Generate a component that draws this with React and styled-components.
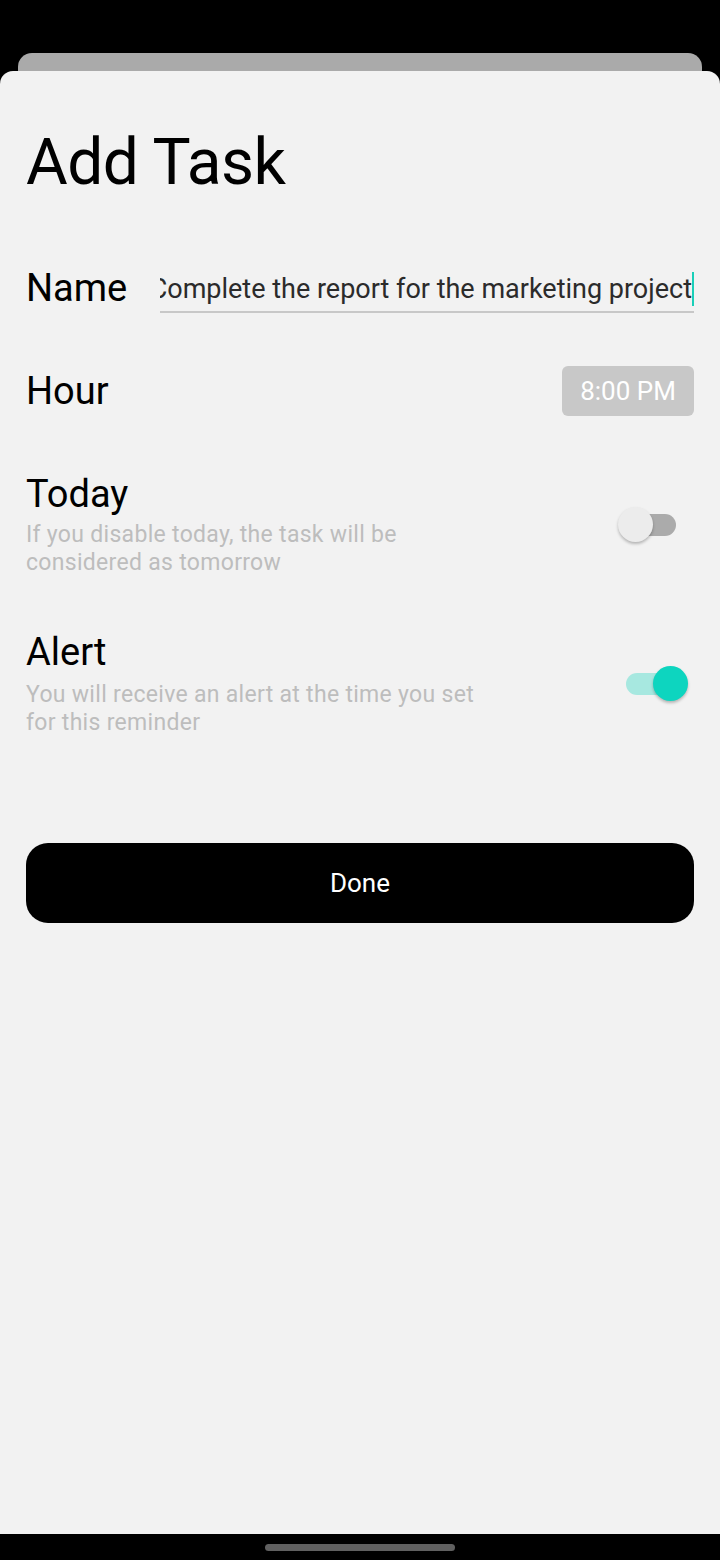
import React, { useState } from "react";
import styled, { createGlobalStyle } from "styled-components";

const GlobalStyle = createGlobalStyle`
  html, body {
    margin: 0;
    padding: 0;
    background: #000;
  }
  body {
    font-family: Roboto, "Liberation Sans", sans-serif;
  }
`;

const Screen = styled.div`
  width: 720px;
  height: 1560px;
  display: flex;
  flex-direction: column;
  background: #000;
  overflow: hidden;
`;

const BackCard = styled.div`
  margin: 53px 18px 0;
  height: 18px;
  background: #aaaaaa;
  border-radius: 14px 14px 0 0;
`;

const Sheet = styled.div`
  flex: 1;
  background: #f2f2f2;
  border-radius: 13px 13px 0 0;
  padding: 54px 26px 0;
  display: flex;
  flex-direction: column;
`;

const Title = styled.h1`
  margin: 0;
  font-size: 64px;
  line-height: 76px;
  font-weight: 400;
  letter-spacing: -0.5px;
  color: #000;
`;

const Row = styled.div`
  display: flex;
  align-items: ${(p) => p.$align || "center"};
  justify-content: space-between;
  margin-top: ${(p) => p.$gap}px;
`;

const Label = styled.div`
  font-size: 38px;
  line-height: 44px;
  color: #000;
  flex-shrink: 0;
  width: ${(p) => (p.$width ? p.$width + "px" : "auto")};
`;

/* the input is scrolled to its end, so the start of the text is cut at the left */
const Field = styled.div`
  flex: 1;
  margin-top: 5px;
  padding-bottom: 4px;
  border-bottom: 2px solid #c8c8c8;
  display: flex;
  justify-content: flex-end;
  align-items: center;
  overflow: hidden;
  white-space: nowrap;
`;

const FieldText = styled.span`
  font-size: 27px;
  line-height: 36px;
  color: #2b2b2b;
`;

const Caret = styled.span`
  flex-shrink: 0;
  width: 2px;
  height: 34px;
  background: #19cfb8;
`;

const TimeChip = styled.div`
  width: 132px;
  height: 50px;
  border-radius: 6px;
  background: #c8c8c8;
  color: #fff;
  font-size: 26px;
  display: flex;
  align-items: center;
  justify-content: center;
`;

const Info = styled.div`
  display: flex;
  flex-direction: column;
`;

const Hint = styled.div`
  margin-top: ${(p) => p.$gap}px;
  font-size: 23px;
  line-height: 28px;
  letter-spacing: 0.3px;
  color: #bdbdbd;
`;

const Switch = styled.div`
  position: relative;
  width: 70px;
  height: 36px;
  margin-right: 6px;
  flex-shrink: 0;
  cursor: pointer;
`;

const Track = styled.div`
  position: absolute;
  left: 8px;
  top: 7px;
  width: 50px;
  height: 22px;
  border-radius: 11px;
  background: ${(p) => (p.$on ? "#a7e8e0" : "#ababab")};
`;

const Thumb = styled.div`
  position: absolute;
  top: 0;
  left: ${(p) => (p.$on ? 35 : 0)}px;
  width: 35px;
  height: 35px;
  border-radius: 50%;
  background: ${(p) => (p.$on ? "#0dd5bf" : "#ececec")};
  box-shadow: 0 2px 3px rgba(0, 0, 0, 0.25);
`;

const DoneButton = styled.button`
  margin-top: 106px;
  height: 80px;
  border: none;
  border-radius: 22px;
  background: #000;
  color: #fff;
  font-family: Roboto, "Liberation Sans", sans-serif;
  font-size: 26px;
  cursor: pointer;
`;

const NavBar = styled.div`
  height: 26px;
  background: #000;
  display: flex;
  justify-content: center;
  padding-top: 10px;
  box-sizing: border-box;
`;

const HomePill = styled.div`
  width: 190px;
  height: 7px;
  border-radius: 4px;
  background: #606060;
`;

function Toggle({ on, onChange }) {
  return (
    <Switch onClick={() => onChange(!on)}>
      <Track $on={on} />
      <Thumb $on={on} />
    </Switch>
  );
}

export default function App() {
  const [today, setToday] = useState(false);
  const [alert, setAlert] = useState(true);

  return (
    <>
      <GlobalStyle />
      <Screen>
        <BackCard />
        <Sheet>
          <Title>Add Task</Title>

          <Row $align="flex-start" $gap={65}>
            <Label $width={134}>Name</Label>
            <Field>
              <FieldText>Complete the report for the marketing project</FieldText>
              <Caret />
            </Field>
          </Row>

          <Row $gap={53}>
            <Label>Hour</Label>
            <TimeChip>8:00 PM</TimeChip>
          </Row>

          <Row $gap={56}>
            <Info>
              <Label>Today</Label>
              <Hint $gap={5}>
                If you disable today, the task will be
                <br />
                considered as tomorrow
              </Hint>
            </Info>
            <Toggle on={today} onChange={setToday} />
          </Row>

          <Row $gap={53}>
            <Info>
              <Label>Alert</Label>
              <Hint $gap={7}>
                You will receive an alert at the time you set
                <br />
                for this reminder
              </Hint>
            </Info>
            <Toggle on={alert} onChange={setAlert} />
          </Row>

          <DoneButton>Done</DoneButton>
        </Sheet>
        <NavBar>
          <HomePill />
        </NavBar>
      </Screen>
    </>
  );
}
